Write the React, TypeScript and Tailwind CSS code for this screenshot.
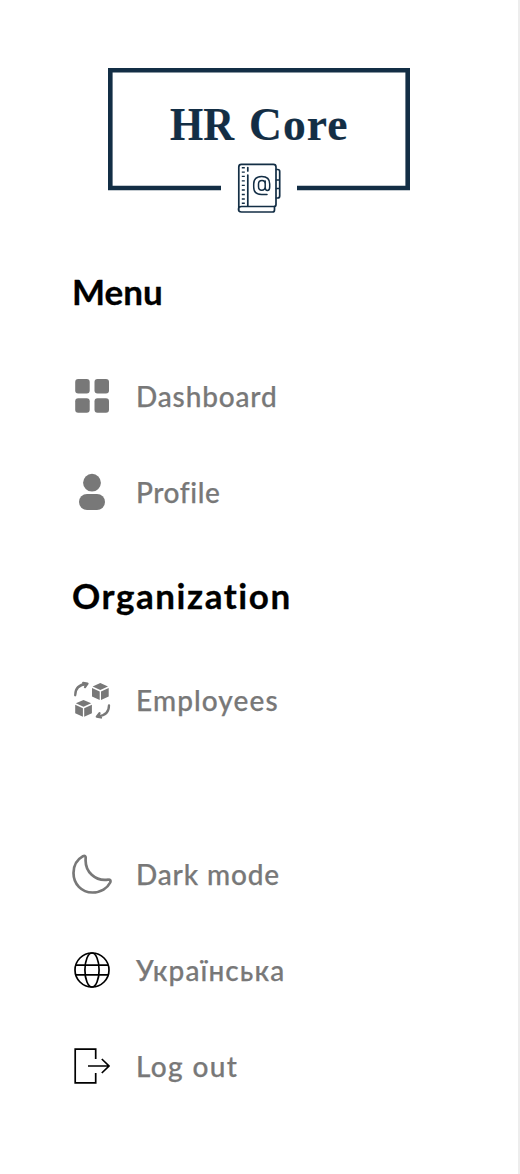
import type { ReactNode } from "react";

function Logo() {
  return (
    <svg viewBox="0 0 302 146" className="h-[146px] w-[302px]" fill="none" stroke="#132e45" role="img" aria-label="HR Core">
      <path d="M113 120H2.3V2.2H299.7V120H189" strokeWidth="4.6" />
      <g fill="#132e45" strokeWidth="0.2" fontSize="45.5" fontWeight="700" fontFamily="'Liberation Serif', serif">
        <text x="62" y="72" textLength="64" lengthAdjust="spacingAndGlyphs">HR</text>
        <text x="141" y="72" textLength="98.500" lengthAdjust="spacing">Core</text>
      </g>
      <g strokeWidth="1.7" strokeLinejoin="round" strokeLinecap="round">
        <path d="M130.8 142V99q0-2.6 2.6-2.6h32q2.6 0 2.6 2.6v37.500q0 2-2 2h-32.500q-3 0-3 2.800q0 2.700 3 2.700h31q2 0 2-2v-3.500" />
        <path d="M139.800 99.500v3.500M139.800 107v31" />
        <path d="M168.500 101.500h1.200q2 0 2 2v24.500q0 2-2 2h-1.200M168.500 112h3M168.500 120.500h3" />
        <path d="M133.800 99.800h3M133.800 104.100h3M133.800 108.400h3M133.800 112.900h3M133.800 117.400h3M133.800 122h3M133.800 126.500h3M133.800 131h3M133.800 135.300h3" strokeWidth="1.4" strokeLinecap="butt" />
        <path d="M159 126.500h-5.500q-7.800 0-7.800-7.500v-3q0-7.500 8-7.500t8 7.500v3q0 3.500-2.300 3.500q-2.200 0-2.200-3v-6.500M157.200 116q0-3.500-3.200-3.500q-3.500 0-3.500 3.500v2.500q0 3.700 3.200 3.700q3.500 0 3.500-3.700" strokeWidth="1.500" />
      </g>
    </svg>
  );
}

function Icon({ children }: { children: ReactNode }) {
  return (
    <svg viewBox="0 0 40 40" className="size-10 shrink-0" fill="none">
      {children}
    </svg>
  );
}

function Item({ icon, label, tracking }: { icon: ReactNode; label: string; tracking: string }) {
  return (
    <a href="#" className="flex h-10 items-center gap-6 text-[#787878]">
      <Icon>{icon}</Icon>
      <span className={`whitespace-nowrap text-[28px] leading-10 font-medium [-webkit-text-stroke:0.25px_#787878] ${tracking}`}>{label}</span>
    </a>
  );
}

const dashboard = (
  <g fill="#787878">
    <rect x="3.200" y="3" width="14.500" height="14.500" rx="3" />
    <rect x="22.500" y="3" width="14.500" height="14.500" rx="3" />
    <rect x="3.200" y="22.300" width="14.500" height="14.500" rx="3" />
    <rect x="22.500" y="22.300" width="14.500" height="14.500" rx="3" />
  </g>
);

const profile = (
  <g fill="#787878">
    <circle cx="20" cy="10.700" r="8.900" />
    <rect x="7" y="22" width="26" height="16" rx="8" />
  </g>
);

const employees = (
  <g>
    <g fill="#787878">
      <path d="M28.300 3.100 36 6.500 28.300 10 20.600 6.500zM20 8l7.700 3.400V20L20 16.500zM36.700 8v8.500L29 20v-8.600z" />
      <path d="m11.500 19.900 7.700 3.400-7.700 3.500-7.700-3.500zM3.200 24.800l7.700 3.400v8.600l-7.700-3.500zM19.900 24.800v8.500l-7.700 3.500v-8.600z" />
    </g>
    <path d="M3.200 15.300C3.200 8.500 7 4.500 14.500 4M11.200 3l4.300.6-2.500 3.500M37 25.300C37 32 33 35.800 26 36.300M29 37.500l-4.200-.9 2.700-3.400" stroke="#787878" strokeWidth="2.300" strokeLinecap="round" strokeLinejoin="round" />
  </g>
);

const moon = (
  <path d="M11 2.200C5 5.600 1.500 12 1.500 19C1.500 30 9.500 38.500 20.500 38.500C29 38.500 35.500 34 38.200 28.500C39 26.500 38 25.300 36 25.700C23.500 27.500 12.500 18 13.700 4.200C13.900 2 12.700 1.300 11 2.200Z" stroke="#787878" strokeWidth="2.700" strokeLinejoin="round" />
);

const globe = (
  <g stroke="#000" strokeWidth="1.700">
    <circle cx="20" cy="20" r="17" />
    <ellipse cx="20" cy="20" rx="7.100" ry="17" />
    <path d="M3.800 15.100h32.400M3.800 24.900h32.400" />
  </g>
);

const logout = (
  <path d="M23.700 13V3.200H3.200v33.600h20.500V27M16 20h21M29.800 13l7.200 7-7.200 7" stroke="#000" strokeWidth="1.700" />
);

export default function App() {
  return (
    <aside className="flex h-[1174px] w-[520px] flex-col border-r-2 border-[#ededed] bg-white pl-[72px] font-['Lato','Noto_Sans',sans-serif]">
      <div className="mt-[68px] ml-9 h-[146px]">
        <Logo />
      </div>
      <h2 className="mt-[57px] text-[35px] leading-10 font-bold tracking-[0px] text-black [-webkit-text-stroke:0.3px_#000]">Menu</h2>
      <nav className="mt-[65px] flex flex-col gap-14">
        <Item icon={dashboard} label="Dashboard" tracking="tracking-[0.85px]" />
        <Item icon={profile} label="Profile" tracking="tracking-[0.6px]" />
      </nav>
      <h2 className="mt-[63px] text-[35px] leading-10 font-bold tracking-[1.55px] text-black [-webkit-text-stroke:0.3px_#000]">Organization</h2>
      <nav className="mt-[65px]">
        <Item icon={employees} label="Employees" tracking="tracking-[1.1px]" />
      </nav>
      <div className="mt-[134px] flex flex-col gap-14">
        <Item icon={moon} label="Dark mode" tracking="tracking-[0.85px]" />
        <Item icon={globe} label="Українська" tracking="tracking-[1.1px]" />
        <Item icon={logout} label="Log out" tracking="tracking-[1.35px]" />
      </div>
    </aside>
  );
}
